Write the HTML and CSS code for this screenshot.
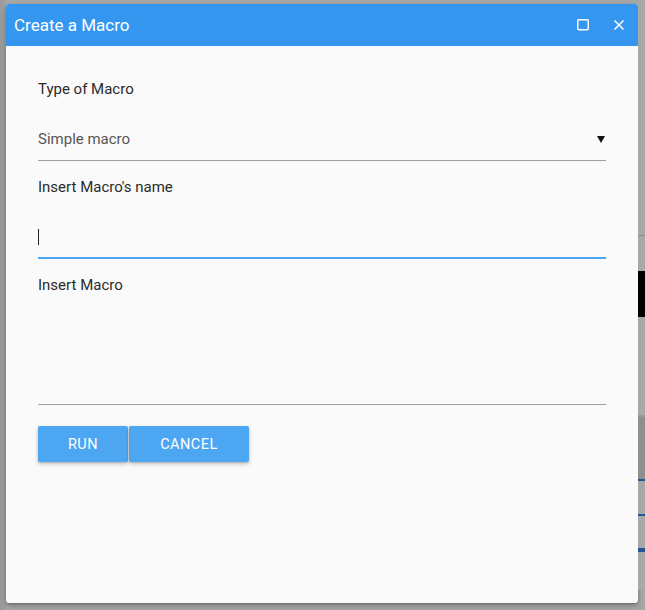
FILE: index.html
```html
<!DOCTYPE html>
<html>
<head>
<meta charset="utf-8">
<link rel="stylesheet" href="styles.css">
</head>
<body>
<div class="screen">
  <div class="dialog">
    <div class="titlebar">
      <span class="title">Create a Macro</span>
      <span class="tools">
        <svg class="ico" width="14" height="14" viewBox="0 0 14 14"><rect x="1.75" y="1.75" width="10.5" height="10" rx="1.2" fill="none" stroke="#fff" stroke-width="1.5"/></svg>
        <svg class="ico" width="14" height="14" viewBox="0 0 14 14"><path d="M2.5 2.5 L11.5 11.5 M11.5 2.5 L2.5 11.5" stroke="#fff" stroke-width="1.5" fill="none"/></svg>
      </span>
    </div>
    <div class="body">
      <div class="label first">Type of Macro</div>
      <div class="select"><span class="value">Simple macro</span><span class="arrow"></span></div>
      <div class="label">Insert Macro's name</div>
      <div class="input"><span class="caret"></span></div>
      <div class="label">Insert Macro</div>
      <div class="textarea"></div>
      <div class="buttons">
        <button class="btn run">RUN</button>
        <button class="btn cancel">CANCEL</button>
      </div>
    </div>
  </div>
  <div class="backdrop-strip">
    <div class="s s1"></div>
    <div class="s s2"></div>
    <div class="s s3"></div>
    <div class="s s4"></div>
    <div class="s s5"></div>
    <div class="s s6"></div>
    <div class="s s7"></div>
    <div class="s s8"></div>
  </div>
</div>
</body>
</html>
```
FILE: styles.css
```css
html, body { margin: 0; padding: 0; }
body {
  width: 645px;
  height: 610px;
  overflow: hidden;
  background: #a6a6a6;
  font-family: Roboto, "Liberation Sans", sans-serif;
}
.screen {
  display: flex;
  align-items: flex-start;
  height: 610px;
  padding: 4px 0 0 6px;
  box-sizing: border-box;
  background: linear-gradient(to right, #9a9a9a 0, #a2a2a2 6px, #a8a8a8 6px);
}
.dialog {
  width: 632px;
  height: 599px;
  background: #fafafa;
  border-radius: 3px;
  box-shadow: 0 3px 6px rgba(0,0,0,0.25), 0 1px 2px rgba(0,0,0,0.2);
  display: flex;
  flex-direction: column;
  overflow: hidden;
  flex: none;
}
.titlebar {
  height: 42px;
  background: #3596ef;
  color: #fff;
  display: flex;
  align-items: center;
  justify-content: space-between;
  padding: 0 12px 0 8px;
  flex: none;
}
.title { font-size: 17px; }
.tools { display: flex; gap: 22px; align-items: center; }
.ico { display: block; }
.body {
  padding: 34px 32px 0 32px;
  color: #333;
}
.label {
  font-size: 15px;
  line-height: 19px;
  height: 19px;
  margin-top: 17px;
  color: #2b2b2b;
}
.label.first { margin-top: 0; }
.select {
  margin-top: 17px;
  height: 43px;
  padding-top: 1px;
  border-bottom: 1px solid #9e9e9e;
  display: flex;
  align-items: center;
  justify-content: space-between;
}
.value { font-size: 15px; color: #555; }
.arrow {
  width: 0; height: 0;
  border-left: 4px solid transparent;
  border-right: 4px solid transparent;
  border-top: 7px solid #111;
  margin-right: 1px;
  margin-top: 1px;
}
.input {
  margin-top: 17px;
  height: 43px;
  border-bottom: 2px solid #4ba5f2;
  display: flex;
  align-items: center;
}
.caret {
  width: 1px;
  height: 16px;
  background: #222;
  margin-top: 2px;
}
.textarea {
  height: 109px;
  border-bottom: 1px solid #9e9e9e;
}
.buttons {
  margin-top: 21px;
  display: flex;
  gap: 1px;
}
.btn {
  height: 36px;
  border: none;
  border-radius: 2px;
  background: #4ca6f2;
  color: #fff;
  font-family: Roboto, "Liberation Sans", sans-serif;
  font-size: 14.5px;
  letter-spacing: 0.5px;
  box-shadow: 0 2px 4px rgba(0,0,0,0.22), 0 1px 2px rgba(0,0,0,0.12);
  padding: 0;
}
.run { width: 90px; }
.cancel { width: 120px; }
.backdrop-strip {
  width: 7px;
  margin-top: -4px;
  display: flex;
  flex-direction: column;
  flex: none;
}
.s { width: 100%; }
.s1 { height: 235px; background: #a8a8a8; border-bottom: 1px solid #8c8c8c; }
.s2 { height: 35px; background: #a9a9a9; }
.s3 { height: 46px; background: #000; }
.s4 { height: 98px; background: #a8a8a8; border-bottom: 2px solid #999; }
.s5 { height: 62px; background: #8f8f8f; }
.s6 { height: 33px; background: #a8a8a8; border-top: 2px solid #24549a; }
.s7 { height: 32px; background: #a8a8a8; border-top: 2px solid #24549a; }
.s8 { height: 40px; background: #a8a8a8; border-top: 2px solid #24549a; box-shadow: inset 0 34px 0 -32px #24549a; }
```
